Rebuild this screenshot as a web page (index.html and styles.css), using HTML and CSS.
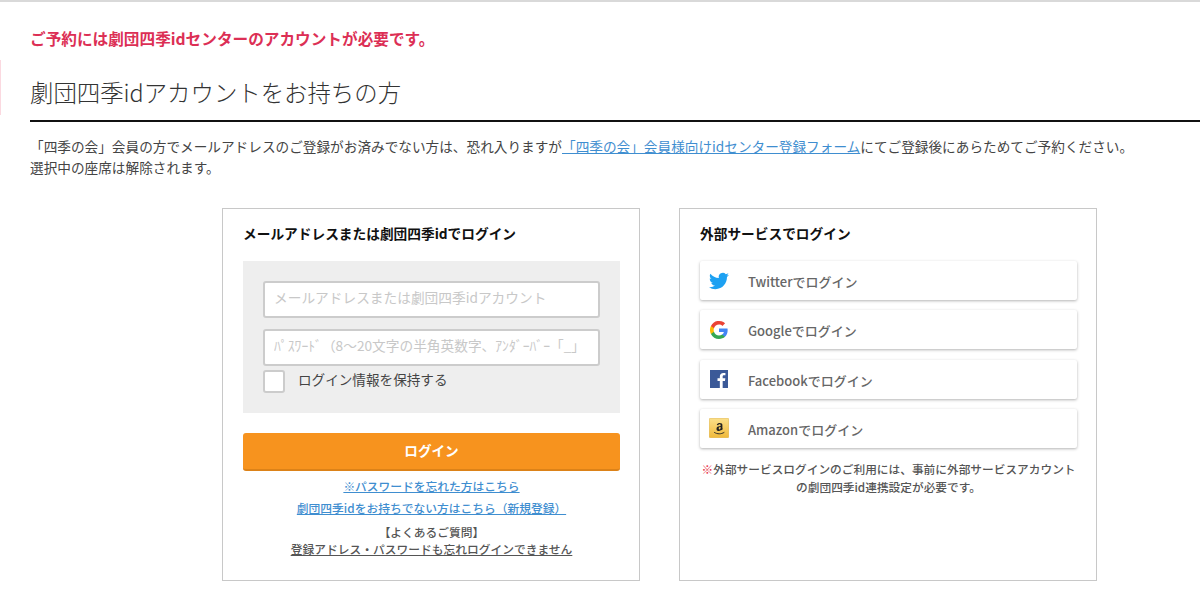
FILE: index.html
```html
<!DOCTYPE html>
<html lang="ja">
<head>
  <meta charset="UTF-8" />
  <title>劇団四季idセンター ログイン</title>
  <link rel="stylesheet" href="styles.css">
</head>
<body>

  <p class="notice">ご予約には劇団四季idセンターのアカウントが必要です。</p>

  <div class="lead">
    <h1>劇団四季idアカウントをお持ちの方</h1>
  </div>
  <div class="rule"></div>

  <p class="intro">「四季の会」会員の方でメールアドレスのご登録がお済みでない方は、恐れ入りますが<a href="#">「四季の会」会員様向けidセンター登録フォーム</a>にてご登録後にあらためてご予約ください。<br>選択中の座席は解除されます。</p>

  <div class="cards">
    <section class="card">
      <h2>メールアドレスまたは劇団四季idでログイン</h2>
      <div class="form-box">
        <input class="field" type="text" placeholder="メールアドレスまたは劇団四季idアカウント"/>
        <input class="field" type="text" placeholder="ﾊﾟｽﾜｰﾄﾞ（8～20文字の半角英数字、ｱﾝﾀﾞｰﾊﾞｰ「_」"/>
        <label class="keep"><span class="check"></span><span class="keep-text">ログイン情報を保持する</span></label>
      </div>
      <button class="login">ログイン</button>
      <p class="link-line"><a href="#">※パスワードを忘れた方はこちら</a></p>
      <p class="link-line"><a href="#">劇団四季idをお持ちでない方はこちら（新規登録）</a></p>
      <p class="faq">【よくあるご質問】<br><a href="#">登録アドレス・パスワードも忘れログインできません</a></p>
    </section>

    <section class="card">
      <h2>外部サービスでログイン</h2>
      <a class="service" href="#">
        <svg class="icon" viewBox="0 0 24 24"><path fill="#1da1f2" d="M23.95 4.57a10 10 0 0 1-2.82.77 4.96 4.96 0 0 0 2.16-2.72 9.9 9.9 0 0 1-3.12 1.18 4.92 4.92 0 0 0-8.38 4.48A13.98 13.98 0 0 1 1.64 3.16a4.82 4.82 0 0 0-.67 2.48c0 1.71.87 3.21 2.19 4.1a4.9 4.9 0 0 1-2.23-.62v.06a4.92 4.92 0 0 0 3.95 4.83 5 5 0 0 1-2.21.08 4.94 4.94 0 0 0 4.6 3.42A9.87 9.87 0 0 1 0 19.54a13.94 13.94 0 0 0 7.55 2.21c9.05 0 14-7.5 14-13.98 0-.21 0-.42-.02-.63a9.94 9.94 0 0 0 2.42-2.57z"/></svg>
        <span>Twitterでログイン</span>
      </a>
      <a class="service" href="#">
        <svg class="icon" viewBox="-1.3 -1.300 26.600 26.600">
          <path fill="#4285f4" d="M23.5 12.3c0-.8-.1-1.6-.2-2.3H12v4.500h6.500a5.500 5.500 0 0 1-2.400 3.600v3h3.900c2.200-2.100 3.500-5.100 3.500-8.800z"/>
          <path fill="#34a853" d="M12 24c3.200 0 6-1.100 8-2.900l-3.900-3c-1.100.7-2.500 1.200-4.100 1.200-3.100 0-5.800-2.100-6.700-5H1.300v3.100A12 12 0 0 0 12 24z"/>
          <path fill="#fbbc05" d="M5.300 14.300a7.200 7.200 0 0 1 0-4.600V6.600h-4a12 12 0 0 0 0 10.800z"/>
          <path fill="#ea4335" d="M12 4.800c1.800 0 3.400.6 4.600 1.800L20.100 3.100A12 12 0 0 0 1.300 6.600l4 3.100c.9-2.800 3.600-4.900 6.700-4.900z"/>
        </svg>
        <span>Googleでログイン</span>
      </a>
      <a class="service" href="#">
        <svg class="icon" viewBox="0 0 24 24"><rect x="1.200" y="1.200" width="21.600" height="21.600" fill="#3b5998"/><path fill="#fff" d="M16.400 22.800v-8.400h2.800l.4-3.200h-3.200V9.200c0-.9.300-1.600 1.600-1.600h1.700V4.800c-.3 0-1.300-.1-2.500-.1-2.500 0-4.200 1.500-4.200 4.300v2.200h-2.800v3.200H13v8.400z"/></svg>
        <span>Facebookでログイン</span>
      </a>
      <a class="service" href="#">
        <svg class="icon" viewBox="0 0 24 24">
          <defs><linearGradient id="amz" x1="0" y1="0" x2="0" y2="1"><stop offset="0" stop-color="#fbe08a"/><stop offset="1" stop-color="#f0b93a"/></linearGradient></defs>
          <rect x=".3" y=".3" width="23.400" height="23.400" rx="1.500" fill="url(#amz)" stroke="#d9a62e" stroke-width=".6"/>
          <g transform="translate(-2.400 -3) scale(1.200)">
            <path fill="#222" d="M13.700 14.800c-.5.500-1 .8-1.900.8-1.300 0-2.300-.8-2.300-2.200 0-1.200.7-2 1.600-2.300.8-.3 1.800-.4 2.500-.5v-.4c0-.4 0-.8-.2-1.100-.2-.3-.5-.4-.9-.4-.6 0-1.100.3-1.200 1l-1.500-.2c.3-1.600 1.800-2.100 3-2.100.7 0 1.500.2 2 .7.600.6.600 1.400.6 2.200v2c0 .6.200.9.500 1.200l-1.100 1.100zm-.1-3.200c-.8 0-1.900.2-1.900 1.300 0 .6.300 1 .8 1 .4 0 .7-.2.900-.6.200-.4.200-.8.200-1.700z"/>
            <path fill="none" stroke="#222" stroke-width=".9" stroke-linecap="round" d="M7.500 17c3 1.800 6.500 1.800 9.500 0"/>
          </g>
        </svg>
        <span>Amazonでログイン</span>
      </a>
      <p class="service-note"><span class="mark">※</span>外部サービスログインのご利用には、事前に外部サービスアカウント<br>の劇団四季id連携設定が必要です。</p>
    </section>
  </div>

</body>
</html>
```

FILE: styles.css
```css
* {
  box-sizing: border-box;
}

body {
  margin: 0;
  height: 600px;
  overflow: hidden;
  background: #fff;
  color: #444;
  font-family: "Noto Sans CJK JP", "Noto Sans", sans-serif;
  border-top: 2px solid #d9d9d9;
}

p, h1, h2 {
  margin: 0;
}

a {
  color: #3f8ed0;
}

.notice {
  padding: 27px 0 0 30px;
  height: 58px;
  color: #dc2f55;
  font-size: 15.65px;
  line-height: 20px;
  font-weight: 700;
}

.lead {
  display: flex;
  align-items: center;
  height: 55px;
  padding: 8px 0 0 29px;
  border-left: 1px solid #fbd9e0;
}

h1 {
  color: #333;
  font-size: 23.4px;
  font-weight: 300;
}

.rule {
  height: 2px;
  margin: 5px 0 0 30px;
  background: #111;
}

.intro {
  margin-top: 14px;
  padding-left: 30px;
  font-size: 13.65px;
  line-height: 21px;
}

.cards {
  display: flex;
  gap: 39px;
  margin: 30px 0 0 222px;
}

.card {
  width: 418px;
  height: 373px;
  padding: 14px 19px 0 20px;
  border: 1px solid #c8c8c8;
}

h2 {
  height: 38px;
  color: #111;
  font-size: 13.7px;
  line-height: 20px;
  font-weight: 700;
}

.form-box {
  display: flex;
  flex-direction: column;
  height: 152px;
  padding: 20px;
  background: #eee;
}

.field {
  width: 100%;
  height: 37px;
  margin-bottom: 11px;
  padding: 0 9px 5px;
  background: #fff;
  border: 2px solid #ccc;
  border-radius: 3px;
  font-family: inherit;
  font-size: 13.7px;
}

.field:nth-child(2) {
  margin-bottom: 3px;
}

.field::placeholder {
  color: #c8c8c8;
}

.keep {
  display: flex;
  align-items: center;
  gap: 13px;
  font-size: 13.6px;
  color: #444;
}

.keep-text {
  padding-bottom: 4px;
}

.check {
  width: 22px;
  height: 23px;
  background: #fff;
  border: 2px solid #ccc;
  border-radius: 3px;
}

.login {
  display: block;
  width: 100%;
  height: 38px;
  margin-top: 20px;
  padding: 0 0 2px;
  background: #f7931e;
  color: #fff;
  border: none;
  border-bottom: 2px solid #dc8218;
  border-radius: 3px;
  font-family: inherit;
  font-size: 13.6px;
  font-weight: 700;
}

.link-line {
  margin-top: 5px;
  font-size: 11.75px;
  line-height: 17px;
  text-align: center;
  font-weight: 500;
}

.login + .link-line {
  margin-top: 6px;
}

.faq {
  margin-top: 7px;
  color: #555;
  font-size: 11.75px;
  line-height: 17px;
  text-align: center;
  font-weight: 500;
}

.faq a {
  color: #555;
}

.service {
  display: flex;
  align-items: center;
  height: 39px;
  margin-bottom: 10.33px;
  padding-left: 9px;
  background: #fff;
  border-radius: 2px;
  box-shadow: 0 1px 3px rgba(0, 0, 0, 0.3);
  color: #666;
  font-size: 13px;
  font-weight: 500;
  text-decoration: none;
}

.service span {
  padding-top: 2px;
}

.icon {
  width: 20px;
  height: 20px;
  margin-right: 19px;
}

.service-note {
  margin-top: 12.33px;
  font-size: 11.7px;
  line-height: 18px;
  text-align: center;
  color: #555;
  font-weight: 500;
}

.mark {
  color: #e8334a;
}
```
